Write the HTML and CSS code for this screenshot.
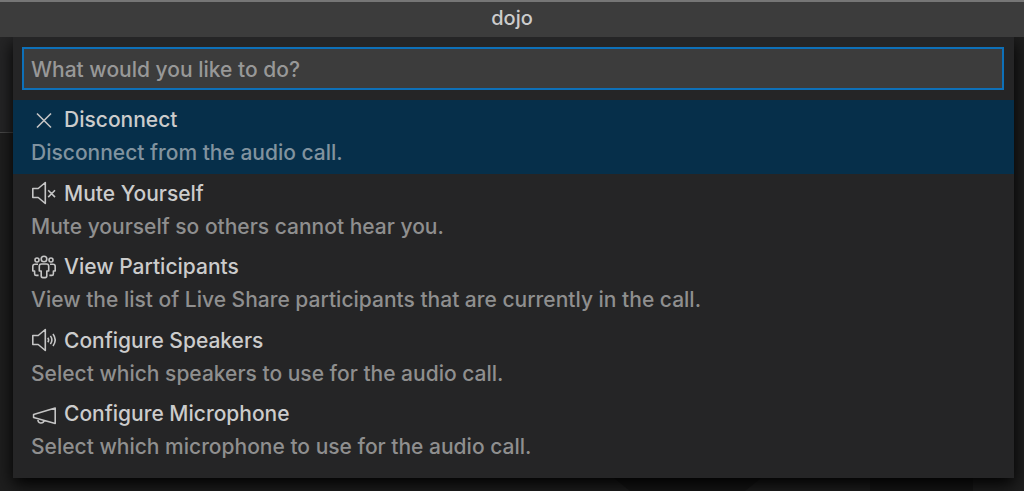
FILE: index.html
```html
<!DOCTYPE html>
<html lang="en">
<head>
    <meta charset="UTF-8">
    <meta name="viewport" content="width=device-width, initial-scale=1.0">
    <title>dojo</title>
    <link rel="stylesheet" href="styles.css">
</head>
<body>
    <header class="titlebar">dojo</header>
    <main class="workbench">
        <div class="sidebar-edge"></div>
        <div class="watermark">
            <svg viewBox="0 0 1024 20" preserveAspectRatio="none" aria-hidden="true">
                <path d="M605 0L630 20H745L770 0ZM870 0H973V20H870Z"/>
            </svg>
        </div>
        <section class="quick-input">
            <input type="text" class="quick-input-box" aria-label="What would you like to do?" placeholder="What would you like to do?">
            <ul class="quick-input-list">
                <li>
                    <button type="button" class="item selected">
                        <span class="label">
                            <svg class="icon" viewBox="0 0 24 24" aria-hidden="true"><path d="M5 5.5l14 14M19 5.5l-14 14"/></svg>
                            Disconnect
                        </span>
                        <span class="detail">Disconnect from the audio call.</span>
                    </button>
                </li>
                <li>
                    <button type="button" class="item">
                        <span class="label">
                            <svg class="icon" viewBox="0 0 24 24" aria-hidden="true"><path d="M.8 7.5h5.4l7.1-6v21l-7.1-6H.8zM16.2 9.3l6.8 6.8M23 9.3l-6.8 6.8"/></svg>
                            Mute Yourself
                        </span>
                        <span class="detail">Mute yourself so others cannot hear you.</span>
                    </button>
                </li>
                <li>
                    <button type="button" class="item">
                        <span class="label">
                            <svg class="icon" viewBox="0 0 24 24" aria-hidden="true">
                                <circle cx="12" cy="4" r="2.8"/>
                                <circle cx="5" cy="5" r="2"/>
                                <circle cx="19" cy="5" r="2"/>
                                <path d="M9.5 9h5q2.2 0 2.2 2.2V16h-1.9v4.8q0 1.8-1.6 1.8h-2.4q-1.6 0-1.6-1.8V16H7.3v-4.8Q7.3 9 9.5 9z"/>
                                <path d="M6 9.2H3Q.8 9.2.8 11.4V16h1.8v2.7q0 1.7 1.6 1.7h2.4M18 9.2h3q2.2 0 2.2 2.2V16h-1.8v2.7q0 1.7-1.6 1.7h-2.4"/>
                            </svg>
                            View Participants
                        </span>
                        <span class="detail">View the list of Live Share participants that are currently in the call.</span>
                    </button>
                </li>
                <li>
                    <button type="button" class="item">
                        <span class="label">
                            <svg class="icon" viewBox="0 0 24 24" aria-hidden="true"><path d="M.8 7.5h5.4l7.1-6v21l-7.1-6H.8zM15.8 9.7q1.6 2.3 0 4.6M18.4 7.900q3 4.100 0 8.200M21 6q4.400 6 0 12"/></svg>
                            Configure Speakers
                        </span>
                        <span class="detail">Select which speakers to use for the audio call.</span>
                    </button>
                </li>
                <li>
                    <button type="button" class="item">
                        <span class="label">
                            <svg class="icon" viewBox="0 0 24 24" aria-hidden="true"><path d="M1.6 12.6L23.2 6v15.400L1.600 15.600zM6 16.800q-.4 3.600 2.600 4.200 2.900.3 3.500-2.600"/></svg>
                            Configure Microphone
                        </span>
                        <span class="detail">Select which microphone to use for the audio call.</span>
                    </button>
                </li>
            </ul>
        </section>
    </main>
</body>
</html>
```
FILE: styles.css
```css
* {
    box-sizing: border-box;
}

body {
    margin: 0;
    min-height: 100vh;
    display: flex;
    flex-direction: column;
    overflow: hidden;
    background-color: #1e1e1e;
    color: #cccccc;
    font-family: Inter, "Liberation Sans", sans-serif;
    font-size: 21px;
    font-weight: 500;
}

.titlebar {
    height: 37px;
    border-top: 2px solid #767676;
    background-color: #3c3c3c;
    font-size: 20px;
    line-height: 33px;
    text-align: center;
}

.workbench {
    position: relative;
    flex: 1;
    padding: 0 10px 13px 13px;
}

/* parts of the editor that show around the picker */
.sidebar-edge {
    position: absolute;
    top: 0;
    left: 0;
    width: 28px;
    height: 96px;
    border-bottom: 1px solid #484848;
    background-color: #252526;
}

.watermark {
    position: absolute;
    right: 0;
    bottom: 0;
    left: 0;
    height: 20px;
}

.watermark svg {
    display: block;
    width: 100%;
    height: 100%;
    fill: #161616;
}

.quick-input {
    position: relative;
    padding: 10px 0;
    background-color: #252526;
    box-shadow: 0 6px 16px #000000;
    clip-path: inset(0 -30px -30px -30px);
}

.quick-input-box {
    display: block;
    width: calc(100% - 19px);
    height: 43px;
    margin: 0 10px 10px 9px;
    padding: 2px 7px 0;
    border: 2px solid #0e70b8;
    border-radius: 0;
    outline: none;
    background-color: #3c3c3c;
    color: #cccccc;
    font: inherit;
}

.quick-input-box::placeholder {
    color: #989898;
    opacity: 1;
}

.quick-input-list {
    display: grid;
    grid-auto-rows: 1fr;
    min-height: 368px;
    margin: 0;
    padding: 0;
    list-style: none;
}

.item {
    display: flex;
    flex-direction: column;
    width: 100%;
    height: 100%;
    padding: 3px 18px;
    border: none;
    background: none;
    color: #cccccc;
    font: inherit;
    line-height: 33px;
    text-align: left;
    cursor: pointer;
}

.item.selected {
    background-color: #062f4a;
}

.label {
    display: flex;
    align-items: center;
    gap: 8px;
}

.detail {
    color: #8f8f8f;
}

.selected .detail {
    color: #81939f;
}

.icon {
    width: 24px;
    height: 24px;
    margin-left: 1px;
    fill: none;
    stroke: #c5c5c5;
    stroke-width: 1.6;
    stroke-linejoin: round;
}
```
